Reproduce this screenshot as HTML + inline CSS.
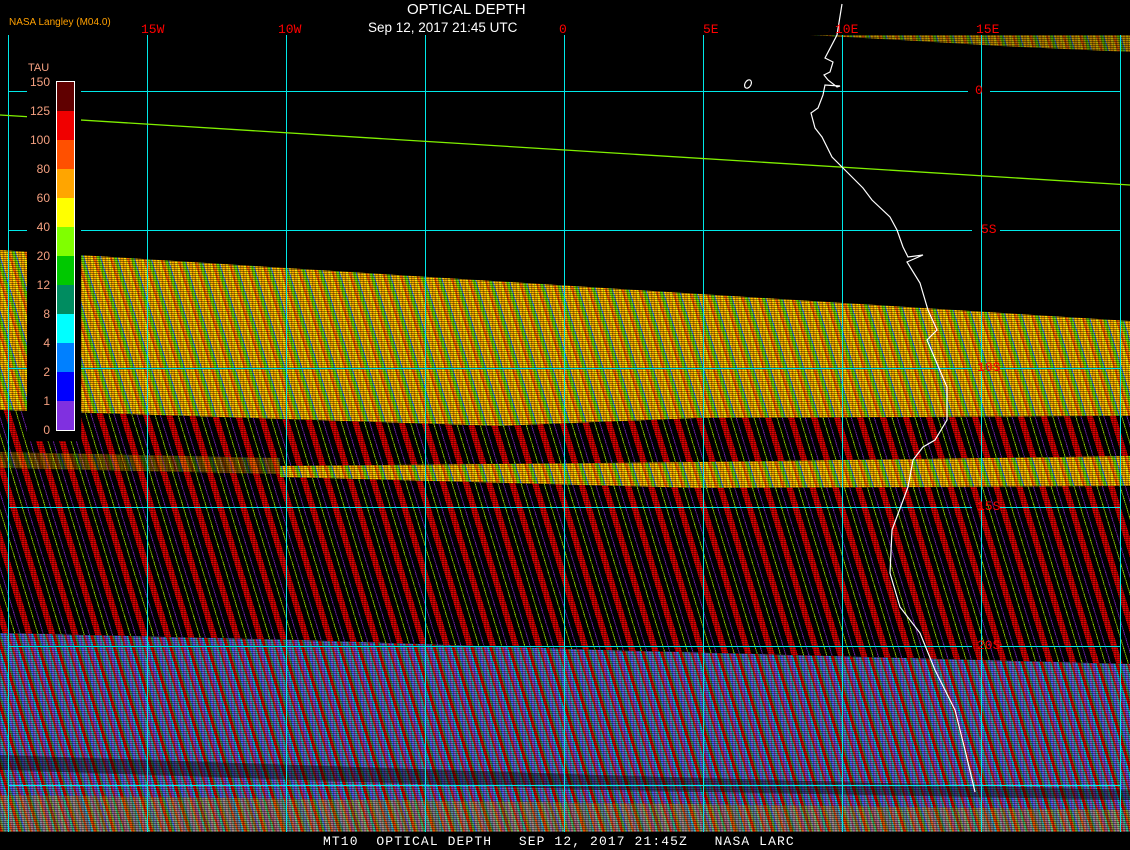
<!DOCTYPE html>
<html><head><meta charset="utf-8"><style>
html,body{margin:0;padding:0;background:#000;}
#c{position:relative;width:1130px;height:850px;overflow:hidden;background:#000;font-family:"Liberation Sans",sans-serif;}
.b{position:absolute;left:0;top:0;width:1130px;height:850px;}
.tex{position:absolute;left:0;top:0;width:1130px;height:850px;background:repeating-linear-gradient(0deg,rgba(0,0,0,.4) 0 1px,transparent 1px 2px),repeating-linear-gradient(90deg,rgba(0,0,0,.25) 0 1px,transparent 1px 3px);}
.yel{background:repeating-linear-gradient(73deg,#ffa500 0 3px,#ffe000 3px 6px,#ff6000 6px 8px,#ffa500 8px 10px,#70e000 10px 13px,#4070ff 13px 14px,#ffd000 14px 16px);}
.red{background:repeating-linear-gradient(73deg,#e00000 0 6px,#000 6px 11px,#90d000 11px 12px,#000 12px 16px,#7020b0 16px 17px,#000 17px 22px);}
.blu{background:repeating-linear-gradient(73deg,#8040d0 0 3px,#00c0e0 3px 5px,#e00000 5px 8px,#3a9050 8px 10px,#4060ff 10px 12px,#9050c0 12px 14px,#20b0b0 14px 16px,#d02020 16px 18px);}
.t{position:absolute;color:#f00;font-family:"Liberation Mono",monospace;font-size:13px;line-height:12px;}
.lg{position:absolute;left:27px;width:23px;text-align:right;color:#f4a080;font-size:12px;line-height:11px;}
</style></head><body><div id="c">
<div class="b yel" style="clip-path:polygon(0 250px,1130px 321px,1130px 416px,700px 418px,500px 426px,0 410px)"></div>
<div class="b red" style="clip-path:polygon(0 410px,500px 426px,700px 418px,1130px 416px,1130px 664px,600px 650px,300px 640px,0 633px)"></div>
<div class="b yel" style="clip-path:polygon(280px 466px,700px 462px,1130px 456px,1130px 486px,700px 488px,280px 477px)"></div>
<div class="b yel" style="opacity:.45;clip-path:polygon(0 452px,280px 458px,280px 474px,0 468px)"></div>
<div class="b blu" style="clip-path:polygon(0 633px,300px 640px,600px 650px,1130px 664px,1130px 832px,0 832px)"></div>
<div class="b" style="background:rgba(0,0,0,.4);clip-path:polygon(0 755px,600px 775px,1130px 790px,1130px 800px,600px 790px,0 770px)"></div>
<div class="b yel" style="opacity:.35;clip-path:polygon(0 795px,1130px 810px,1130px 832px,0 832px)"></div>
<div class="b yel" style="opacity:.7;clip-path:polygon(810px 35px,1130px 35px,1130px 52px,1000px 46px,900px 40px)"></div>
<div class="tex"></div>
<svg class="b" width="1130" height="850" style="position:absolute;left:0;top:0">
<g stroke="#00e8e8" stroke-width="1" shape-rendering="crispEdges">
<line x1="8.5" y1="35" x2="8.5" y2="832"/><line x1="147.5" y1="35" x2="147.5" y2="832"/><line x1="286.5" y1="35" x2="286.5" y2="832"/><line x1="425.5" y1="35" x2="425.5" y2="832"/><line x1="564.5" y1="35" x2="564.5" y2="832"/><line x1="703.5" y1="35" x2="703.5" y2="832"/><line x1="842.5" y1="35" x2="842.5" y2="832"/><line x1="981.5" y1="35" x2="981.5" y2="832"/><line x1="1120.5" y1="35" x2="1120.5" y2="832"/>
<line x1="8" y1="91.5" x2="968" y2="91.5"/><line x1="990" y1="91.5" x2="1120" y2="91.5"/>
<line x1="8" y1="230.5" x2="972" y2="230.5"/><line x1="1000" y1="230.5" x2="1120" y2="230.5"/>
<line x1="8" y1="368.5" x2="972" y2="368.5"/><line x1="1000" y1="368.5" x2="1120" y2="368.5"/>
<line x1="8" y1="507.5" x2="972" y2="507.5"/><line x1="1000" y1="507.5" x2="1120" y2="507.5"/>
<line x1="8" y1="646.5" x2="972" y2="646.5"/><line x1="1000" y1="646.5" x2="1120" y2="646.5"/>
<line x1="8" y1="785.5" x2="1120" y2="785.5"/>
</g>
<line x1="0" y1="115" x2="1130" y2="185" stroke="#80f000" stroke-width="1.3"/>
<g fill="none" stroke="#fff" stroke-width="1.2">
<polyline points="842,4 837,35 825,58 833,62 830,72 824,75 828,80 837,87 840,86 825,85 823,95 818,108 811,113 815,128 822,137 832,157 843,168 863,188 872,200 890,217 897,230 903,247 908,257 923,255 907,262 920,283 928,310 937,330 927,340 947,387 947,420 935,440 923,447 913,460 908,487 892,530 890,573 900,607 920,633 935,670 955,710 965,750 975,792"/>
<ellipse cx="748" cy="84" rx="3" ry="4.5" transform="rotate(30 748 84)"/>
</g>
</svg>
<div class="t" style="left:141px;top:24px">15W</div>
<div class="t" style="left:278px;top:24px">10W</div>
<div class="t" style="left:559px;top:24px">0</div>
<div class="t" style="left:703px;top:24px">5E</div>
<div class="t" style="left:835px;top:24px">10E</div>
<div class="t" style="left:976px;top:24px">15E</div>
<div class="t" style="left:975px;top:85px">0</div>
<div class="t" style="left:981px;top:224px">5S</div>
<div class="t" style="left:977px;top:362px">10S</div>
<div class="t" style="left:977px;top:501px">15S</div>
<div class="t" style="left:977px;top:640px">20S</div>
<div style="position:absolute;left:407px;top:1px;color:#fff;font-size:15px;line-height:17px">OPTICAL DEPTH</div>
<div style="position:absolute;left:368px;top:20px;color:#fff;font-size:13.5px;line-height:16px">Sep 12, 2017 21:45 UTC</div>
<div style="position:absolute;left:9px;top:17px;color:#ffa000;font-size:10px;line-height:12px">NASA Langley (M04.0)</div>
<div style="position:absolute;left:27px;top:60px;width:54px;height:381px;background:#000"></div>
<div style="position:absolute;left:28px;top:62px;color:#f4a080;font-size:11px">TAU</div>
<div style="position:absolute;left:56px;top:81px;width:17px;height:348px;border:1px solid #fff;background:linear-gradient(#600000 0 29px,#f00000 29px 58px,#ff5000 58px 87px,#ffa500 87px 116px,#ffff00 116px 145px,#80ff00 145px 174px,#00c800 174px 203px,#008c60 203px 232px,#00ffff 232px 261px,#0080ff 261px 290px,#0000ff 290px 319px,#8030e0 319px 348px)"></div>
<div class="lg" style="top:77px">150</div>
<div class="lg" style="top:106px">125</div>
<div class="lg" style="top:135px">100</div>
<div class="lg" style="top:164px">80</div>
<div class="lg" style="top:193px">60</div>
<div class="lg" style="top:222px">40</div>
<div class="lg" style="top:251px">20</div>
<div class="lg" style="top:280px">12</div>
<div class="lg" style="top:309px">8</div>
<div class="lg" style="top:338px">4</div>
<div class="lg" style="top:367px">2</div>
<div class="lg" style="top:396px">1</div>
<div class="lg" style="top:425px">0</div>
<div style="position:absolute;left:0;top:832px;width:1130px;height:18px;background:#000"></div>
<div style="position:absolute;left:323px;top:835px;color:#fff;font-family:'Liberation Mono',monospace;font-size:13px;line-height:14px;letter-spacing:1.1px;white-space:pre">MT10  OPTICAL DEPTH   SEP 12, 2017 21:45Z   NASA LARC</div>
</div></body></html>
